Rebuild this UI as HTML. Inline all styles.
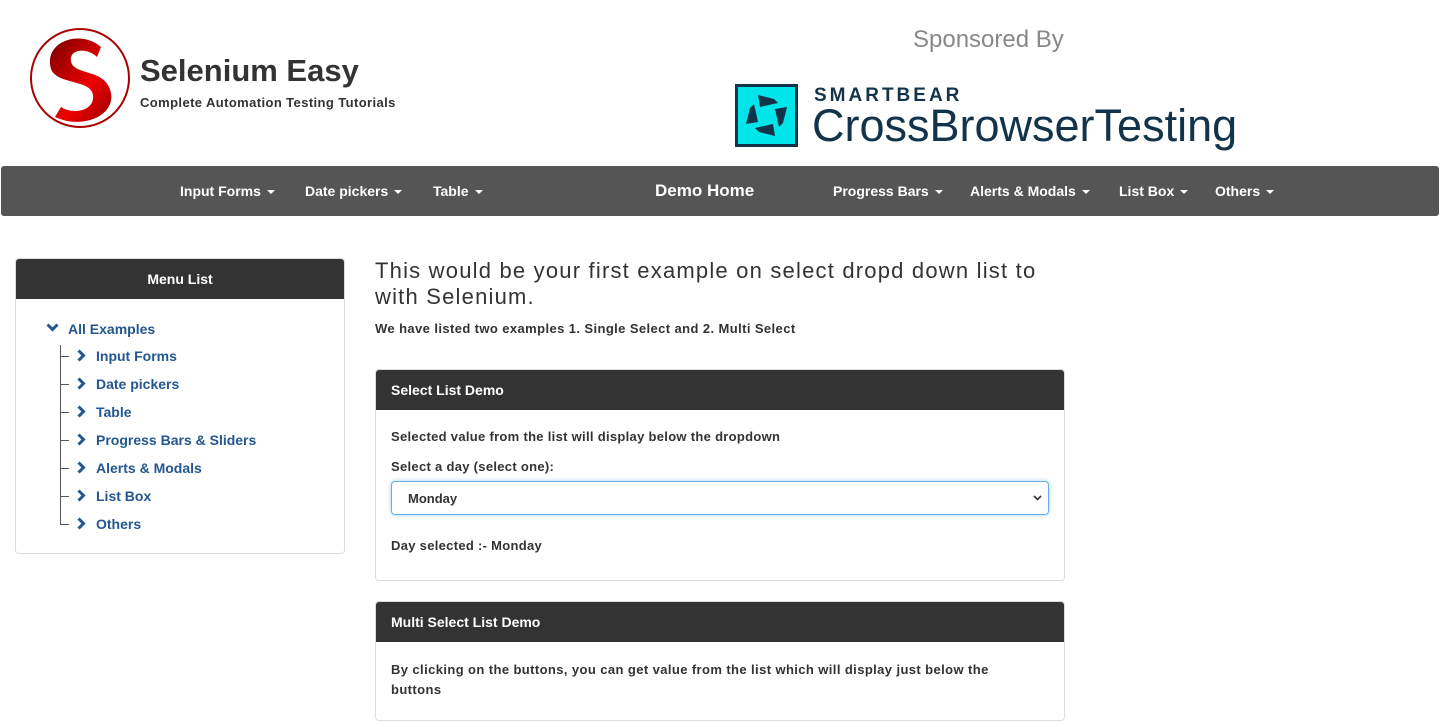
<!DOCTYPE html>
<html><head><meta charset="utf-8"><style>
*{box-sizing:border-box}
body{margin:0;width:1440px;height:707px;overflow:hidden;background:#fff;font-family:"Liberation Sans",sans-serif;color:#333}
.abs{position:absolute}
.nav{position:absolute;left:1px;top:166px;width:1438px;height:50px;background:#555;border-radius:3px}
.nav span{position:absolute;top:17px;color:#fff;font-size:14px;font-weight:bold}
.car{display:inline-block;border-top:4px solid #fff;border-left:4px solid transparent;border-right:4px solid transparent;margin-left:6px;vertical-align:middle}
.panel{position:absolute;border:1px solid #ddd;border-radius:4px;background:#fff;overflow:hidden}
.ph{background:#333;color:#fff;font-weight:bold;font-size:14px;height:40px;line-height:40px}
.menu a{position:absolute;color:#23578f;font-size:14px;font-weight:bold;text-decoration:none}
</style></head><body>
<svg class="abs" style="left:29px;top:27px" width="102" height="102" viewBox="0 0 102 102">
<defs><linearGradient id="g" x1="0" y1="0" x2="1" y2="1"><stop offset="0" stop-color="#7a0000"/><stop offset=".6" stop-color="#e00"/><stop offset="1" stop-color="#900"/></linearGradient></defs>
<circle cx="51" cy="51" r="49" fill="#fff" stroke="#a00" stroke-width="2"/>
<path d="M72 20 C52 2 14 14 22 42 C28 58 62 52 64 68 C66 84 44 88 32 80 L26 90 C56 104 92 86 80 60 C72 42 44 48 42 34 C40 22 58 20 68 30 Z" fill="url(#g)"/>
</svg>
<div class="abs" style="left:140px;top:53px;font-size:31px;font-weight:bold;color:#333">Selenium Easy</div>
<div class="abs" style="left:140px;top:95px;font-size:13px;font-weight:bold;color:#333;letter-spacing:0.4px">Complete Automation Testing Tutorials</div>
<div class="abs" style="left:913px;top:26px;font-size:24px;color:#888">Sponsored By</div>
<div class="abs" style="left:735px;top:84px;width:63px;height:63px;background:#00e5ea;border:3px solid #12334a"></div>
<svg class="abs" style="left:738px;top:87px" width="57" height="57" viewBox="0 0 57 57"><path d="M20 8 L36 12 L40 16 L22 20 Z M49 20 L45 36 L41 40 L37 22 Z M37 49 L21 45 L17 41 L35 37 Z M8 37 L12 21 L16 17 L20 35 Z" fill="#12334a"/></svg>
<div class="abs" style="left:814px;top:85px;font-size:19px;font-weight:bold;letter-spacing:3px;color:#12334a">SMARTBEAR</div>
<div class="abs" style="left:812px;top:100px;font-size:45px;color:#12334a;letter-spacing:0px">CrossBrowserTesting</div>
<div class="nav">
<span style="left:179px">Input Forms<i class="car"></i></span>
<span style="left:304px">Date pickers<i class="car"></i></span>
<span style="left:432px">Table<i class="car"></i></span>
<span style="left:654px;top:15px;font-size:17px">Demo Home</span>
<span style="left:832px">Progress Bars<i class="car"></i></span>
<span style="left:969px">Alerts &amp; Modals<i class="car"></i></span>
<span style="left:1118px">List Box<i class="car"></i></span>
<span style="left:1214px">Others<i class="car"></i></span>
</div>
<div class="panel menu" style="left:15px;top:258px;width:330px;height:296px">
<div class="ph" style="text-align:center">Menu List</div>
<svg class="abs" style="left:30px;top:64px" width="13" height="9" viewBox="0 0 13 9"><path d="M1.5 1.5 L6.5 6.5 L11.5 1.5" fill="none" stroke="#23578f" stroke-width="3"/></svg>
<a style="left:52px;top:62px">All Examples</a>
</div>
<div class="menu">
<div class="abs" style="left:60px;top:345px;width:1px;height:180px;background:#555"></div>
<script>
var n=["Input Forms","Date pickers","Table","Progress Bars &amp; Sliders","Alerts &amp; Modals","List Box","Others"];
var h="";for(var i=0;i<n.length;i++){var y=348+i*28;h+='<div class="abs" style="left:61px;top:'+(y+8)+'px;width:8px;height:1px;background:#555"></div><svg class="abs" style="left:77px;top:'+(y+1)+'px" width="9" height="13" viewBox="0 0 9 13"><path d="M1.5 1.5 L6.5 6.5 L1.5 11.5" fill="none" stroke="#23578f" stroke-width="3"/></svg><a style="left:96px;top:'+y+'px">'+n[i]+'</a>';}
document.write(h);
</script>
</div>
<div class="abs" style="left:375px;top:258px;font-size:22px;line-height:26px;color:#333;width:690px;letter-spacing:1.2px">This would be your first example on select dropd down list to with Selenium.</div>
<div class="abs" style="left:375px;top:321px;font-size:13px;font-weight:bold;letter-spacing:0.4px">We have listed two examples 1. Single Select and 2. Multi Select</div>
<div class="panel" style="left:375px;top:369px;width:690px;height:212px">
<div class="ph" style="padding-left:15px">Select List Demo</div>
<div class="abs" style="left:15px;top:59px;font-size:13px;font-weight:bold;letter-spacing:0.3px">Selected value from the list will display below the dropdown</div>
<div class="abs" style="left:15px;top:89px;font-size:13px;font-weight:bold;letter-spacing:0.3px">Select a day (select one):</div>
<div class="abs" style="left:15px;top:111px;width:658px;height:34px;border:1px solid #66afe9;border-radius:4px;box-shadow:0 0 4px rgba(102,175,233,.6);font-size:13px;font-weight:bold;padding:9px 16px">Monday<svg style="position:absolute;right:6px;top:13px" width="9" height="6" viewBox="0 0 9 6"><path d="M1 1 L4.5 4.5 L8 1" fill="none" stroke="#333" stroke-width="1.6"/></svg></div>
<div class="abs" style="left:15px;top:168px;font-size:13px;font-weight:bold;letter-spacing:0.3px">Day selected :- Monday</div>
</div>
<div class="panel" style="left:375px;top:601px;width:690px;height:120px">
<div class="ph" style="padding-left:15px">Multi Select List Demo</div>
<div class="abs" style="left:15px;top:58px;font-size:13px;font-weight:bold;line-height:20px;width:620px;letter-spacing:0.4px">By clicking on the buttons, you can get value from the list which will display just below the buttons</div>
</div>
</body></html>
